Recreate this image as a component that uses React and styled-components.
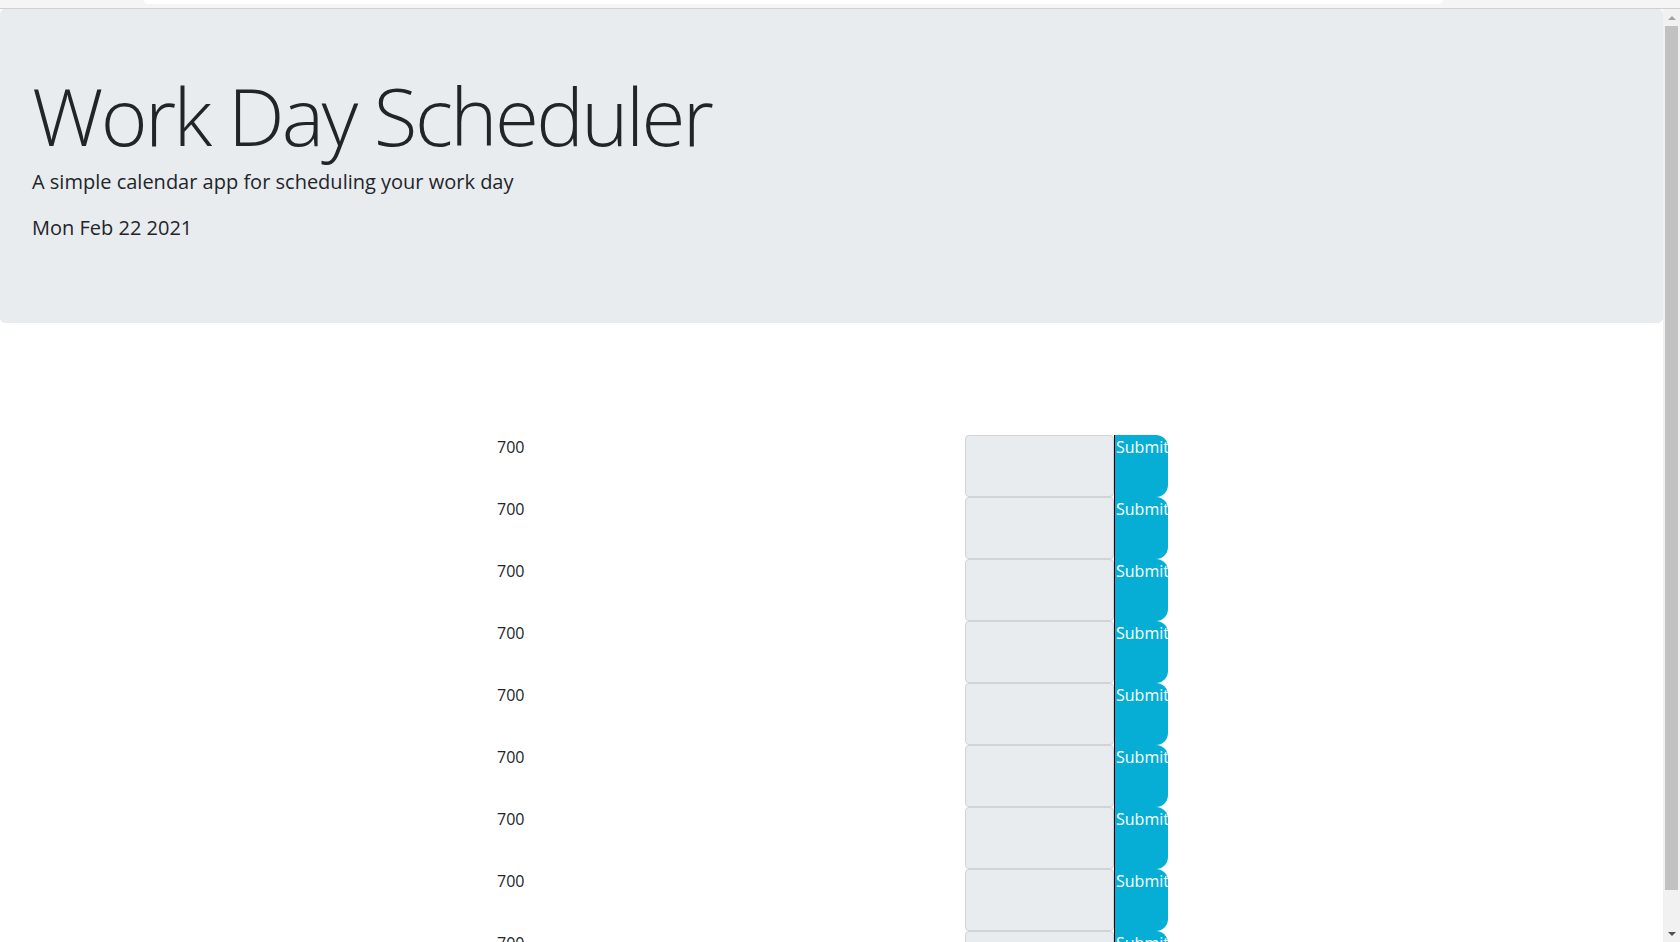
import styled, { createGlobalStyle } from "styled-components";

const GlobalStyle = createGlobalStyle`
  html, body {
    margin: 0;
    padding: 0;
    overflow: hidden;
  }
  body {
    font-family: "Open Sans", "Liberation Sans", sans-serif;
    color: #212529;
    background: #ffffff;
  }
  * {
    box-sizing: border-box;
  }
`;

const hours = Array.from({ length: 9 }, () => "700");

function App() {
  return (
    <Screen>
      <GlobalStyle />
      <TopStrip>
        <AddressBar />
      </TopStrip>
      <Viewport>
        <Page>
          <Jumbotron>
            <Title>Work Day Scheduler</Title>
            <Lead>A simple calendar app for scheduling your work day</Lead>
            <DateLine>Mon Feb 22 2021</DateLine>
          </Jumbotron>
          <Schedule>
            {hours.map((hour, i) => (
              <HourRow key={i}>
                <HourLabel>{hour}</HourLabel>
                <TaskInput />
                <SubmitButton>Submit</SubmitButton>
              </HourRow>
            ))}
          </Schedule>
        </Page>
        <Scrollbar>
          <ArrowButton>
            <Arrow $up />
          </ArrowButton>
          <Track>
            <Thumb />
          </Track>
          <ArrowButton>
            <Arrow />
          </ArrowButton>
        </Scrollbar>
      </Viewport>
    </Screen>
  );
}

const Screen = styled.div`
  display: flex;
  flex-direction: column;
  width: 1680px;
  height: 942px;
  overflow: hidden;
`;

const TopStrip = styled.div`
  flex: 0 0 9px;
  background: #f5f5f5;
  border-bottom: 1px solid #d0d0d0;
  padding-left: 144px;
  padding-right: 237px;
`;

const AddressBar = styled.div`
  height: 4px;
  background: #ffffff;
  border-radius: 0 0 4px 4px;
`;

const Viewport = styled.div`
  flex: 1;
  display: flex;
  min-height: 0;
`;

const Page = styled.main`
  flex: 1;
  overflow: hidden;
`;

const Jumbotron = styled.header`
  background: #e9ecef;
  border-radius: 0.3rem;
  padding: 58px 32px 80px;
`;

const Title = styled.h1`
  margin: 0 0 4px;
  font-size: 80px;
  font-weight: 350;
  line-height: 1.2;
  letter-spacing: -2.6px;
`;

const Lead = styled.p`
  margin: 0 0 16px;
  font-size: 20px;
  font-weight: 400;
  line-height: 1.5;
`;

const DateLine = styled(Lead)`
  margin: 0;
`;

const Schedule = styled.section`
  display: flex;
  flex-direction: column;
  align-items: center;
  padding: 112px 0 0 2px;
`;

const HourRow = styled.div`
  display: grid;
  grid-template-columns: 1fr 149px 54px;
  width: 671px;
  height: 62px;
`;

const HourLabel = styled.div`
  font-size: 16px;
  line-height: 24px;
`;

const TaskInput = styled.textarea`
  resize: none;
  background: #e9ecef;
  border: 1px solid #ced4da;
  border-radius: 4px;
  margin: 0;
  height: 62px;
`;

const SubmitButton = styled.button`
  margin: 0;
  padding: 0 0 0 1px;
  height: 62px;
  border: none;
  border-left: 1px solid #000000;
  border-radius: 0 12px 12px 0;
  background: #06aed5;
  color: #ffffff;
  font-family: "Open Sans", "Liberation Sans", sans-serif;
  font-size: 16px;
  line-height: 24px;
  text-align: left;
  display: flex;
  align-items: flex-start;
  overflow: hidden;
  white-space: nowrap;
`;

const Scrollbar = styled.aside`
  flex: 0 0 17px;
  display: flex;
  flex-direction: column;
  background: #f1f1f1;
`;

const ArrowButton = styled.div`
  flex: 0 0 17px;
  display: flex;
  align-items: center;
  justify-content: center;
`;

const Arrow = styled.span`
  width: 0;
  height: 0;
  border-left: 4px solid transparent;
  border-right: 4px solid transparent;
  ${(p) =>
    p.$up
      ? "border-bottom: 4px solid #a3a3a3;"
      : "border-top: 4px solid #505050;"}
`;

const Track = styled.div`
  flex: 1;
  padding: 0 2px 35px;
`;

const Thumb = styled.div`
  height: 100%;
  background: #c1c1c1;
`;

export default App;
